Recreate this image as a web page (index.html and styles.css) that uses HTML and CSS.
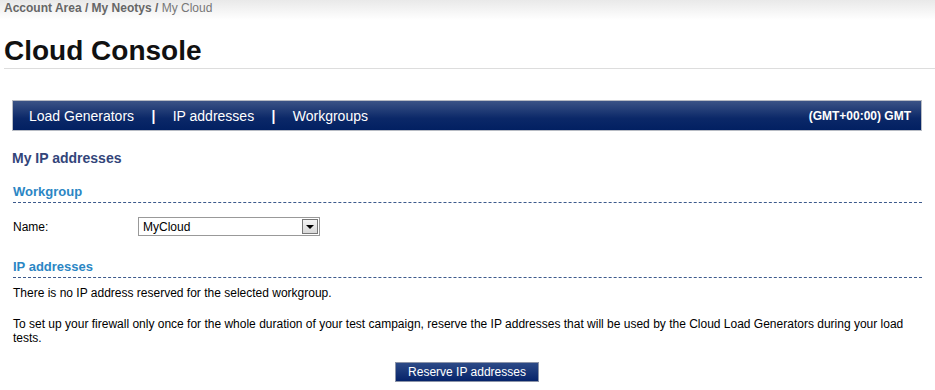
FILE: index.html
```html
<!DOCTYPE html>
<html lang="en">
<head>
    <meta charset="UTF-8">
    <title>Cloud Console</title>
    <link rel="stylesheet" href="styles.css">
</head>
<body>
    <div class="breadcrumb">
        <a href="#">Account Area</a> / <a href="#">My Neotys</a> / <span>My Cloud</span>
    </div>
    <h1>Cloud Console</h1>

    <div class="navbar">
        <div class="nav-links">
            <a href="#">Load Generators</a>
            <span class="sep">|</span>
            <a href="#">IP addresses</a>
            <span class="sep">|</span>
            <a href="#">Workgroups</a>
        </div>
        <div class="timezone">(GMT+00:00) GMT</div>
    </div>

    <div class="content">
        <h2>My IP addresses</h2>

        <h3>Workgroup</h3>
        <div class="form-row">
            <label for="workgroup">Name:</label>
            <div class="select" id="workgroup">
                <span>MyCloud</span>
                <span class="arrow"></span>
            </div>
        </div>

        <h3 class="section">IP addresses</h3>
        <p class="first">There is no IP address reserved for the selected workgroup.</p>
        <p>To set up your firewall only once for the whole duration of your test campaign, reserve the IP addresses that will be used by the Cloud Load Generators during your load tests.</p>

        <div class="actions">
            <button>Reserve IP addresses</button>
        </div>
    </div>
</body>
</html>
```

FILE: styles.css
```css
body {
    margin: 0;
    font-family: 'Liberation Sans', Arial, sans-serif;
    font-size: 12px;
    color: #000;
    background: #fff;
}
a {
    text-decoration: none;
    color: inherit;
}
.breadcrumb {
    height: 20px;
    line-height: 17px;
    padding: 0 4px;
    background: linear-gradient(#e9e9e9, #fff);
    color: #666;
    font-weight: bold;
}
.breadcrumb span {
    font-weight: normal;
    color: #777;
}
h1 {
    margin: 17px 0 0 4px;
    height: 31px;
    line-height: 28px;
    font-size: 28px;
    color: #111;
    border-bottom: 1px solid #ddd;
}
.navbar {
    margin: 31px 13px 0 12px;
    height: 29px;
    border: 1px solid #b8bcc4;
    background: linear-gradient(#3b5386, #0b2868 60%, #022062);
    display: flex;
    justify-content: space-between;
    align-items: center;
    color: #fff;
    padding: 0 10px 0 16px;
}
.nav-links a {
    font-size: 14px;
}
.nav-links .sep {
    font-size: 14px;
    font-weight: bold;
    margin: 0 14px;
}
.timezone {
    font-weight: bold;
}
.content {
    padding: 0 13px 0 12px;
}
h2 {
    margin: 19px 0 0;
    font-size: 14px;
    color: #33457a;
}
h3 {
    margin: 18px 0 0 1px;
    font-size: 13px;
    color: #2b86c4;
    padding-bottom: 3px;
    border-bottom: 1px dashed #3d5a8c;
}
h3.section {
    margin-top: 23px;
}
.form-row {
    display: flex;
    align-items: center;
    margin: 14px 0 0 1px;
}
.form-row label {
    width: 125px;
}
.select {
    box-sizing: border-box;
    width: 182px;
    height: 19px;
    border: 1px solid #999;
    display: flex;
    justify-content: space-between;
    align-items: center;
    padding-left: 4px;
}
.arrow {
    width: 16px;
    height: 15px;
    margin-right: 1px;
    border: 1px solid #777;
    box-sizing: border-box;
    background: linear-gradient(#f4f4f4, #d8d8d8);
    position: relative;
}
.arrow::after {
    content: "";
    position: absolute;
    left: 3px;
    top: 5px;
    border-left: 4px solid transparent;
    border-right: 4px solid transparent;
    border-top: 4px solid #000;
}
p {
    margin: 17px 0 0 1px;
    line-height: 14px;
}
p.first {
    margin-top: 8px;
}
.actions {
    text-align: center;
    margin-top: 17px;
}
button {
    font-family: inherit;
    font-size: 12px;
    color: #fff;
    background: linear-gradient(#2c4a87, #06236a);
    border: 1px solid #8c94a8;
    padding: 2px 9px;
    width: 144px;
    height: 20px;
}
```
